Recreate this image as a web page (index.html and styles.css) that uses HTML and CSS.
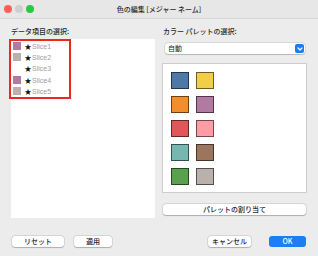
FILE: index.html
```html
<!DOCTYPE html>
<html lang="ja">
<head>
<meta charset="utf-8">
<link rel="stylesheet" href="styles.css">
</head>
<body>
<div class="window">
  <div class="titlebar">
    <div class="lights">
      <span class="light red"></span>
      <span class="light gray"></span>
      <span class="light green"></span>
    </div>
    <div class="title">色の編集 [メジャー ネーム]</div>
    <div></div>
  </div>
  <div class="main">
    <div class="col left">
      <div class="label">データ項目の選択:</div>
      <div class="listbox">
        <div class="rows">
          <div class="row"><span class="sw" style="background:#b07aa1"></span><span class="star">★</span><span class="name">Slice1</span></div>
          <div class="row"><span class="sw" style="background:#bab0ac"></span><span class="star">★</span><span class="name">Slice2</span></div>
          <div class="row"><span class="sw empty"></span><span class="star">★</span><span class="name">Slice3</span></div>
          <div class="row"><span class="sw" style="background:#b07aa1"></span><span class="star">★</span><span class="name">Slice4</span></div>
          <div class="row"><span class="sw" style="background:#bab0ac"></span><span class="star">★</span><span class="name">Slice5</span></div>
        </div>
        <div class="highlight"></div>
      </div>
    </div>
    <div class="col right">
      <div class="label">カラー パレットの選択:</div>
      <div class="select">
        <span>自動</span>
        <span class="chev"><svg width="8" height="8" viewBox="0 0 8 8"><path d="M2 3 L4 5 L6 3" fill="none" stroke="#fff" stroke-width="1.2" stroke-linecap="round" stroke-linejoin="round"/></svg></span>
      </div>
      <div class="palette">
        <div class="grid">
          <span class="cell" style="background:#4e79a7"></span>
          <span class="cell" style="background:#f1ce4a"></span>
          <span class="cell" style="background:#f28e2b"></span>
          <span class="cell" style="background:#b07aa1"></span>
          <span class="cell" style="background:#e15759"></span>
          <span class="cell" style="background:#ff9da7"></span>
          <span class="cell" style="background:#76b7b2"></span>
          <span class="cell" style="background:#9c755f"></span>
          <span class="cell" style="background:#59a14f"></span>
          <span class="cell" style="background:#bab0ac"></span>
        </div>
      </div>
      <div class="btn wide">パレットの割り当て</div>
    </div>
  </div>
  <div class="footer">
    <div class="group">
      <div class="btn reset">リセット</div>
      <div class="btn apply">適用</div>
    </div>
    <div class="group gap2">
      <div class="btn cancel">キャンセル</div>
      <div class="btn ok">OK</div>
    </div>
  </div>
</div>
</body>
</html>
```
FILE: styles.css
```css
* { box-sizing: border-box; }
html, body { margin: 0; padding: 0; }
body {
  width: 318px;
  height: 256px;
  overflow: hidden;
  background: #ececec;
  font-family: "Noto Sans CJK JP", "Liberation Sans", sans-serif;
  font-size: 7px;
  color: #1a1a1a;
}
.window {
  width: 318px;
  height: 256px;
  background: #ececec;
  display: flex;
  flex-direction: column;
}
.titlebar {
  height: 19px;
  background: #e7e7e7;
  border-bottom: 1px solid #d8d8d8;
  display: grid;
  grid-template-columns: 1fr auto 1fr;
  align-items: center;
}
.lights {
  display: flex;
  gap: 3px;
  padding-left: 4px;
}
.light {
  width: 8px;
  height: 8px;
  border-radius: 50%;
  display: block;
}
.light.red { background: #fe5f57; }
.light.gray { background: #cfcfcf; }
.light.green { background: #29c940; }
.title {
  font-size: 7px;
  line-height: 9px;
  color: #2a2a2a;
  font-weight: 500;
}
.main {
  display: grid;
  grid-template-columns: 144px 145px;
  column-gap: 7px;
  padding: 8px 11px 0 11px;
}
.col { display: flex; flex-direction: column; }
.label {
  line-height: 9px;
  height: 9px;
  color: #2a2a2a;
  font-weight: 500;
}
.listbox {
  margin-top: 3px;
  height: 179px;
  background: #fff;
  position: relative;
}
.rows { padding-top: 1.5px; }
.row {
  height: 11.3px;
  display: flex;
  align-items: center;
  padding-left: 1.5px;
}
.sw {
  width: 8px;
  height: 8px;
  display: block;
}
.sw.empty { background: transparent; }
.star {
  margin-left: 4px;
  font-size: 7px;
  line-height: 9px;
  color: #111;
}
.name {
  margin-left: 0.5px;
  color: #a0a0a0;
  font-family: "Liberation Sans", sans-serif;
  font-size: 7px;
  line-height: 9px;
}
.highlight {
  position: absolute;
  left: -2px;
  top: 0;
  width: 62px;
  height: 60px;
  border: 2px solid #ec2a1c;
}
.right .label { margin-left: 1px; }
.select {
  margin: 7px 2px 0 3px;
  height: 11px;
  background: #fff;
  border-radius: 3px;
  box-shadow: 0 0 0 0.5px rgba(0,0,0,0.15), 0 0.5px 1px rgba(0,0,0,0.15);
  display: flex;
  align-items: center;
  justify-content: space-between;
  padding: 0 1px 0 3px;
  line-height: 9px;
}
.chev {
  width: 9px;
  height: 9px;
  background: #1a7df5;
  border-radius: 2px;
  display: flex;
  align-items: center;
  justify-content: center;
}
.palette {
  margin-top: 9px;
  height: 130px;
  background: #fff;
  border: 1px solid #cdcdcd;
  padding: 8px 0 0 8px;
}
.grid {
  display: grid;
  grid-template-columns: 18px 18px;
  grid-auto-rows: 17px;
  column-gap: 7px;
  row-gap: 7px;
}
.cell {
  display: block;
  border: 1px solid rgba(0,0,0,0.55);
}
.btn {
  height: 11px;
  background: #fff;
  border-radius: 3px;
  box-shadow: 0 0 0 0.5px rgba(0,0,0,0.15), 0 0.5px 1px rgba(0,0,0,0.2);
  display: flex;
  align-items: center;
  justify-content: center;
  line-height: 9px;
  color: #222;
  font-weight: 500;
}
.btn.wide {
  margin: 11px 1px 0 1px;
}
.footer {
  display: flex;
  justify-content: space-between;
  padding: 18px 12px 0 12px;
}
.group { display: flex; gap: 10px; }
.group.gap2 { gap: 18px; }
.reset { width: 52px; }
.apply { width: 38px; }
.cancel { width: 43px; }
.ok {
  width: 37px;
  background: #1b7ef6;
  color: #fff;
  box-shadow: none;
}
```
